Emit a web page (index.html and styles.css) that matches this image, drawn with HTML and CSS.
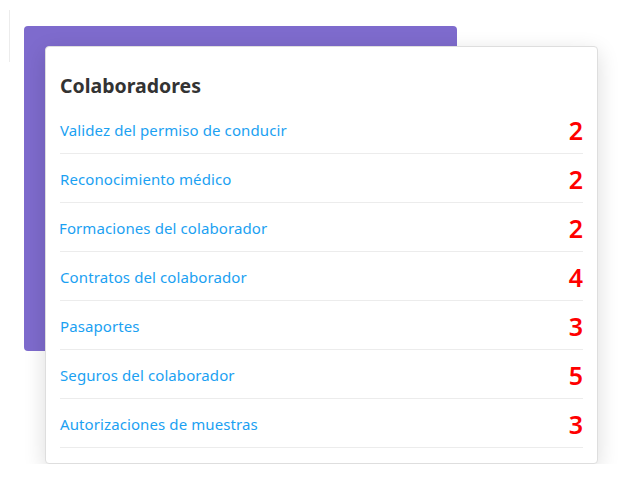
FILE: index.html
```html
<!DOCTYPE html>
<html lang="es">
<head>
    <meta charset="UTF-8">
    <meta name="viewport" content="width=device-width, initial-scale=1.0">
    <title>Colaboradores</title>
    <link rel="stylesheet" href="styles.css">
</head>
<body>
    <div class="edge"></div>
    <div class="stage">
        <!-- purple block behind the panel -->
        <div class="backdrop"></div>

        <div class="panel">
            <h2 class="panel-title">Colaboradores</h2>
            <ul class="doc-list">
                <li class="doc-row"><a href="#" class="doc-link">Validez del permiso de conducir</a><span class="doc-count">2</span></li>
                <li class="doc-row"><a href="#" class="doc-link">Reconocimiento médico</a><span class="doc-count">2</span></li>
                <li class="doc-row"><a href="#" class="doc-link shift">Formaciones del colaborador</a><span class="doc-count">2</span></li>
                <li class="doc-row"><a href="#" class="doc-link">Contratos del colaborador</a><span class="doc-count">4</span></li>
                <li class="doc-row"><a href="#" class="doc-link">Pasaportes</a><span class="doc-count">3</span></li>
                <li class="doc-row"><a href="#" class="doc-link">Seguros del colaborador</a><span class="doc-count">5</span></li>
                <li class="doc-row"><a href="#" class="doc-link">Autorizaciones de muestras</a><span class="doc-count">3</span></li>
            </ul>
        </div>
    </div>
</body>
</html>
```

FILE: styles.css
```css
body {
    font-family: "Noto Sans", "Open Sans", sans-serif;
    margin: 0;
    background-color: #fff;
    position: relative;
}
.edge {
    position: absolute;
    left: 9px;
    top: 10px;
    width: 1px;
    height: 52px;
    background-color: #ececec;
    box-shadow: 0 0 10px rgba(0, 0, 0, 0.04);
}
.stage {
    padding: 26px 0 0 24px;
}
.backdrop {
    width: 433px;
    height: 325px;
    background-color: #7e6bcd;
    border-radius: 4px;
}
.panel {
    position: relative;
    width: 523px;
    margin: -305px 0 0 21px;
    padding: 27px 14px 15px 14px;
    background-color: #fff;
    border: 1px solid #dedede;
    border-radius: 4px;
    box-shadow: 0 6px 22px rgba(0, 0, 0, 0.14);
}
.panel-title {
    margin: 0 0 7px 0;
    font-size: 19.5px;
    line-height: 24px;
    font-weight: 700;
    color: #333;
}
.doc-list {
    list-style: none;
    margin: 0;
    padding: 0;
}
.doc-row {
    display: flex;
    align-items: center;
    justify-content: space-between;
    padding-top: 1px;
    box-sizing: border-box;
    height: 49px;
    border-bottom: 1px solid #ececec;
}
.doc-link {
    font-size: 15px;
    letter-spacing: 0.1px;
    color: #1ba1f2;
    text-decoration: none;
}
.doc-link.shift {
    margin-left: -1px;
}
.doc-count {
    font-size: 25px;
    line-height: 30px;
    font-weight: 600;
    color: #ff0000;
}
```
